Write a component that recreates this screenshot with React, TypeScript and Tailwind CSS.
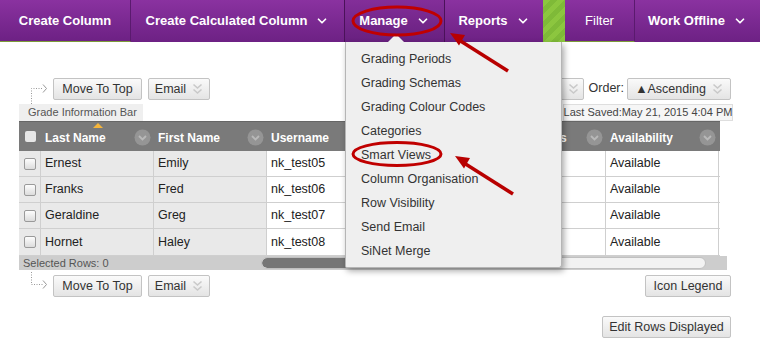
import React from 'react';
import { ChevronDown } from 'lucide-react';

const Chevron = () => <ChevronDown size={14} strokeWidth={3} className="ml-[8px] text-white" />;

const DoubleChevron = () => (
    <svg width="11" height="12" viewBox="0 0 11 12" className="ml-[6px]">
        <path d="M1.5 1.5l4 3.5 4-3.5M1.5 6.5l4 3.5 4-3.5" fill="none" stroke="#c9c9c9" strokeWidth="1.6" />
    </svg>
);

const HeadCircle = () => (
    <svg width="17" height="17" viewBox="0 0 17 17">
        <circle cx="8.5" cy="8.5" r="8" fill="#959595" />
        <path d="M5 7l3.5 3.5L12 7" fill="none" stroke="#b9b9b9" strokeWidth="1.8" />
    </svg>
);

const Connector = ({ down }: { down?: boolean }) => (
    <div className="w-[34px] h-[22px] relative">
        <svg width="22" height="30" viewBox="0 0 22 30" className="absolute left-[9px] top-[-3px] overflow-visible">
            {down ? (
                <>
                    <path d="M3.5 0V12.5H15" fill="none" stroke="#999" strokeDasharray="1 1.5" />
                    <path d="M15 8.5l3.5 4-3.5 4" fill="none" stroke="#999" />
                </>
            ) : (
                <>
                    <path d="M3.5 29V13.5H15" fill="none" stroke="#999" strokeDasharray="1 1.5" />
                    <path d="M15 9.5l3.5 4-3.5 4" fill="none" stroke="#999" />
                </>
            )}
        </svg>
    </div>
);

const Button = ({ children, className = '' }: { children?: React.ReactNode; className?: string }) => (
    <button className={`h-[22px] flex items-center justify-center border border-[#c3c3c3] rounded-[2px] bg-linear-to-b from-[#fafafa] to-[#e4e4e4] text-[12.5px] text-[#333] ${className}`}>
        {children}
    </button>
);

const Checkbox = () => (
    <div className="w-[12px] h-[12px] rounded-[2px] border border-[#9a9a9a] bg-linear-to-b from-[#fdfdfd] to-[#dcdcdc]" />
);

const rows = [
    ['Ernest', 'Emily', 'nk_test05'],
    ['Franks', 'Fred', 'nk_test06'],
    ['Geraldine', 'Greg', 'nk_test07'],
    ['Hornet', 'Haley', 'nk_test08'],
];

const headers = ['Last Name', 'First Name', 'Username', '', 'Last Access', 'Availability'];

const menuItems = [
    'Grading Periods',
    'Grading Schemas',
    'Grading Colour Codes',
    'Categories',
    'Smart Views',
    'Column Organisation',
    'Row Visibility',
    'Send Email',
    'SiNet Merge',
];

export default function App() {
    return (
        <div className="relative w-[760px] h-[348px] overflow-hidden bg-white font-['Liberation_Sans',Arial,sans-serif]">
            {/* Top nav */}
            <div className="flex h-[42px] text-white text-[13px] font-bold">
                <div className="w-[131px] flex items-center justify-center bg-linear-to-b from-[#8a32a0] to-[#6d2184] border-r border-[#5a1a6e] border-b border-b-[#7d9b3a]">
                    Create Column
                </div>
                <div className="w-[214px] flex items-center justify-center bg-linear-to-b from-[#8a32a0] to-[#6d2184] border-r border-[#4a1259]">
                    Create Calculated Column <Chevron />
                </div>
                <div className="w-[100px] flex items-center justify-center bg-linear-to-b from-[#832e99] to-[#68207f] border-r border-[#4a1259]">
                    Manage <Chevron />
                </div>
                <div className="w-[98px] flex items-center justify-center bg-linear-to-b from-[#8a32a0] to-[#6d2184]">
                    Reports <Chevron />
                </div>
                <div className="w-[22px] bg-[repeating-linear-gradient(135deg,#8cc63f_0px,#8cc63f_5px,#7fba38_5px,#7fba38_10px)]" />
                <div className="w-[70px] flex items-center justify-center bg-linear-to-b from-[#8a32a0] to-[#6d2184] border-r border-[#5a1a6e] border-b border-b-[#7d9b3a] font-normal">
                    Filter
                </div>
                <div className="flex-1 flex items-center justify-center bg-linear-to-b from-[#8a32a0] to-[#6d2184]">
                    Work Offline <Chevron />
                </div>
            </div>

            {/* Main */}
            <div className="pl-[19px] w-[733px]">
                <div className="mt-[36px] h-[22px] flex items-center">
                    <Connector />
                    <Button className="w-[89px]">Move To Top</Button>
                    <Button className="w-[62px] ml-[6px]">Email <DoubleChevron /></Button>
                    <Button className="w-[105px] ml-auto justify-end pr-[4px]"><DoubleChevron /></Button>
                    <span className="ml-[5px] text-[12.5px] text-[#333] self-start mt-[1px]">Order:</span>
                    <Button className="w-[104px] ml-[3px] mr-[2px]">▲Ascending <DoubleChevron /></Button>
                </div>

                <div className="mt-[4px] h-[17px] flex justify-between items-stretch">
                    <div className="w-[124px] bg-[#efefef] text-[11px] text-[#555] pl-[9px] flex items-center">Grade Information Bar</div>
                    <div className="w-[170px] bg-[#f6f6f6] border border-[#dedede] text-[11px] text-[#444] whitespace-nowrap flex items-center justify-center">Last Saved:May 21, 2015 4:04 PM</div>
                </div>

                {/* Table */}
                <div className="w-[701px]">
                    <div className="flex h-[30px] bg-[#7a7a7a] border-t border-[#666] text-white text-[12px] font-bold">
                        <div className="w-[22px] flex items-center justify-center">
                            <div className="w-[11px] h-[11px] rounded-[2px] bg-[#e6e6e6]" />
                        </div>
                        {headers.map((h, i) => (
                            <div key={i} className="relative w-[113px] flex items-center pl-[4px] pr-[3px] pt-[2px]">
                                {i === 0 && (
                                    <div className="absolute left-[52px] top-[1px] w-0 h-0 border-l-[5px] border-r-[5px] border-b-[5px] border-l-transparent border-r-transparent border-b-[#f6b53a]" />
                                )}
                                <span className="flex-1">{h}</span>
                                <HeadCircle />
                            </div>
                        ))}
                    </div>
                    {rows.map((r, i) => (
                        <div key={i} className={`flex ${i === 3 ? 'h-[27px]' : 'h-[26px]'} border-b border-[#cfcfcf] text-[12.5px] text-[#222]`}>
                            <div className="w-[22px] bg-[#e9e9e9] border-r border-[#cfcfcf] flex items-center justify-center">
                                <Checkbox />
                            </div>
                            <div className="w-[113px] bg-[#e9e9e9] border-r border-[#cfcfcf] flex items-center pl-[4px]">{r[0]}</div>
                            <div className="w-[113px] bg-[#e9e9e9] border-r border-[#cfcfcf] flex items-center pl-[4px]">{r[1]}</div>
                            <div className="w-[113px] border-r border-[#cfcfcf] flex items-center pl-[4px]">{r[2]}</div>
                            <div className="w-[113px] border-r border-[#cfcfcf]" />
                            <div className="w-[113px] border-r border-[#cfcfcf]" />
                            <div className="w-[113px] border-r border-[#cfcfcf] flex items-center pl-[4px]">Available</div>
                        </div>
                    ))}
                </div>

                <div className="w-[708px] h-[14px] bg-[#cdcdcd] flex items-center">
                    <span className="w-[242px] pl-[4px] text-[11px] text-[#555]">Selected Rows: 0</span>
                    <div className="w-[445px] h-[12px] rounded-full bg-[#f2f2f2] border border-[#c0c0c0] overflow-hidden">
                        <div className="w-[160px] h-full rounded-full bg-[#767676]" />
                    </div>
                </div>

                <div className="mt-[5px] h-[22px] flex items-center">
                    <Connector down />
                    <Button className="w-[89px]">Move To Top</Button>
                    <Button className="w-[62px] ml-[6px]">Email <DoubleChevron /></Button>
                    <Button className="w-[86px] ml-auto mr-[2px]">Icon Legend</Button>
                </div>

                <div className="mt-[19px] flex justify-end">
                    <Button className="w-[129px] mr-[2px]">Edit Rows Displayed</Button>
                </div>
            </div>

            {/* Manage dropdown */}
            <div className="absolute left-[345px] top-[42px] w-[217px] h-[226px] bg-[#efefef] border border-[#b5b5b5] border-t-0 rounded-br-[3px] rounded-bl-[2px] shadow-[2px_3px_6px_rgba(0,0,0,0.35)] pt-[5px]">
                <div className="absolute left-[42px] top-[-8px] w-0 h-0 border-l-[8px] border-r-[8px] border-b-[8px] border-l-transparent border-r-transparent border-b-[#efefef]" />
                {menuItems.map((m) => (
                    <div key={m} className="h-[24px] flex items-center pl-[15px] text-[12.5px] text-[#333]">{m}</div>
                ))}
            </div>

            {/* Annotations */}
            <svg className="absolute inset-0 pointer-events-none" width="760" height="348" viewBox="0 0 760 348">
                <ellipse cx="397" cy="21" rx="44" ry="14" fill="none" stroke="#c00000" strokeWidth="3" />
                <ellipse cx="397" cy="154" rx="44" ry="11.5" fill="none" stroke="#c00000" strokeWidth="3" />
                <line x1="508" y1="71" x2="459" y2="40" stroke="#b80000" strokeWidth="3.5" />
                <polygon points="450,33 465,35 459,45.5" fill="#b80000" />
                <line x1="513" y1="194" x2="464" y2="163" stroke="#b80000" strokeWidth="3.5" />
                <polygon points="455,156 470,158 464,168.5" fill="#b80000" />
            </svg>
        </div>
    );
}
